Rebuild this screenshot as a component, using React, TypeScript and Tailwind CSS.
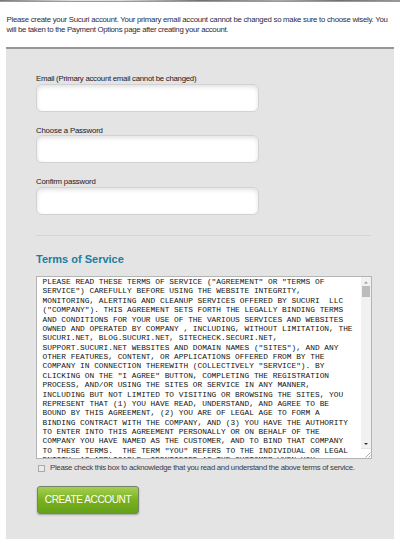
import React from "react";

const terms = [
  'PLEASE READ THESE TERMS OF SERVICE ("AGREEMENT" OR "TERMS OF',
  'SERVICE") CAREFULLY BEFORE USING THE WEBSITE INTEGRITY,',
  "MONITORING, ALERTING AND CLEANUP SERVICES OFFERED BY SUCURI  LLC",
  '("COMPANY"). THIS AGREEMENT SETS FORTH THE LEGALLY BINDING TERMS',
  "AND CONDITIONS FOR YOUR USE OF THE VARIOUS SERVICES AND WEBSITES",
  "OWNED AND OPERATED BY COMPANY , INCLUDING, WITHOUT LIMITATION, THE",
  "SUCURI.NET, BLOG.SUCURI.NET, SITECHECK.SECURI.NET,",
  'SUPPORT.SUCURI.NET WEBSITES AND DOMAIN NAMES ("SITES"), AND ANY',
  "OTHER FEATURES, CONTENT, OR APPLICATIONS OFFERED FROM BY THE",
  'COMPANY IN CONNECTION THEREWITH (COLLECTIVELY "SERVICE"). BY',
  'CLICKING ON THE "I AGREE" BUTTON, COMPLETING THE REGISTRATION',
  "PROCESS, AND/OR USING THE SITES OR SERVICE IN ANY MANNER,",
  "INCLUDING BUT NOT LIMITED TO VISITING OR BROWSING THE SITES, YOU",
  "REPRESENT THAT (1) YOU HAVE READ, UNDERSTAND, AND AGREE TO BE",
  "BOUND BY THIS AGREEMENT, (2) YOU ARE OF LEGAL AGE TO FORM A",
  "BINDING CONTRACT WITH THE COMPANY, AND (3) YOU HAVE THE AUTHORITY",
  "TO ENTER INTO THIS AGREEMENT PERSONALLY OR ON BEHALF OF THE",
  "COMPANY YOU HAVE NAMED AS THE CUSTOMER, AND TO BIND THAT COMPANY",
  'TO THESE TERMS.  THE TERM "YOU" REFERS TO THE INDIVIDUAL OR LEGAL',
  "ENTITY, AS APPLICABLE, IDENTIFIED AS THE CUSTOMER WHEN YOU",
];

function Field({ label, type, tracking }: { label: string; type: string; tracking: string }) {
  return (
    <label className="block h-[51.7px]">
      <span className={`block h-[10.5px] whitespace-nowrap text-[7.8px] leading-[11px] text-[#1c1820] ${tracking}`}>{label}</span>
      <input
        type={type}
        className="block h-[28px] w-[223px] rounded-[6px] border border-[#d2d2d2] bg-white px-2 text-[8px] shadow-[inset_0_2px_4px_rgba(0,0,0,0.12)] outline-none"
      />
    </label>
  );
}

export default function App() {
  return (
    <div className="h-[546px] w-[400px] overflow-hidden bg-white font-['Liberation_Sans',Arial,sans-serif]">
      <div className="h-[2px] border-b border-[#999] bg-[linear-gradient(to_right,#777_0%,#e0e0e0_18%,#ddd_30%,#707070_50%,#aaa_70%,#707070_85%,#999_100%)]" />
      <div className="ml-[6.5px] h-[45px] whitespace-nowrap pt-[12.6px] text-[7.8px] leading-[10.4px] text-[#2e2a3c]">
        <p className="tracking-[-0.26px]">
          Please create your Sucuri account. Your primary email account cannot be changed so make sure to choose wisely. You
        </p>
        <p className="tracking-[-0.3px]">will be taken to the Payment Options page after creating your account.</p>
      </div>
      <form className="ml-[6px] h-[492px] w-[388px] border-t-2 border-[#979797] bg-[#e4e4e4] pl-[30px] pt-[24px]">
        <Field label="Email (Primary account email cannot be changed)" type="email" tracking="tracking-[-0.26px]" />
        <Field label="Choose a Password" type="password" tracking="tracking-[-0.18px]" />
        <Field label="Confirm password" type="password" tracking="tracking-[-0.2px]" />
        <div className="mt-[7px] h-px w-[335px] bg-[#d6d6d6]" />
        <h2 className="mt-[16px] h-[24px] text-[11px] font-bold leading-[14px] text-[#207d9e]">Terms of Service</h2>
        <div className="flex h-[183px] w-[336px] overflow-hidden border border-[#b4b4b4] bg-white">
          <div className="h-full flex-1 overflow-hidden pl-[5.5px] font-['Liberation_Mono','Courier_New',monospace] text-[7.83px] leading-[9.37px] text-[#111]">
            {terms.map((line) => (
              <p key={line} className="whitespace-pre">{line}</p>
            ))}
          </div>
          <div className="flex h-full w-[10px] flex-col items-center bg-[#f1f1f1]">
            <svg width="10" height="9" viewBox="0 0 10 9"><path d="M3 6.5h4L5 4.5z" fill="#999" /></svg>
            <div className="h-[11px] w-[8px] bg-[#bcbcbc]" />
            <div className="flex-1" />
            <svg width="10" height="20" viewBox="0 0 10 20">
              <path d="M3 5h4L5 7z" fill="#333" />
              <path d="M0 10h10v10H0z" fill="#fff" />
              <path d="M0 10.5h10" stroke="#ddd" strokeWidth=".8" />
              <path d="M4.5 19.5l5-5M7.5 19.5l2-2" stroke="#999" strokeWidth=".8" />
            </svg>
          </div>
        </div>
        <label className="mt-[3px] flex h-[12px] items-center">
          <input type="checkbox" className="ml-[2px] size-[7px] appearance-none border border-[#aaa] bg-[#eaeaea]" />
          <span className="ml-[5px] whitespace-nowrap text-[7.8px] leading-[10px] tracking-[-0.29px] text-[#3c3a42]">
            Please check this box to acknowledge that you read and understand the above terms of service.
          </span>
        </label>
        <button type="button" className="ml-[1px] mt-[12px] h-[28px] w-[102px] whitespace-nowrap rounded-[3px] border border-[#73846a] bg-linear-to-b from-[#a5d052] via-[#7bb11c] to-[#64a11b] text-[10.1px] tracking-[-0.42px] text-white shadow-[0_1px_2px_rgba(0,0,0,0.3)]">
          CREATE ACCOUNT
        </button>
      </form>
    </div>
  );
}
